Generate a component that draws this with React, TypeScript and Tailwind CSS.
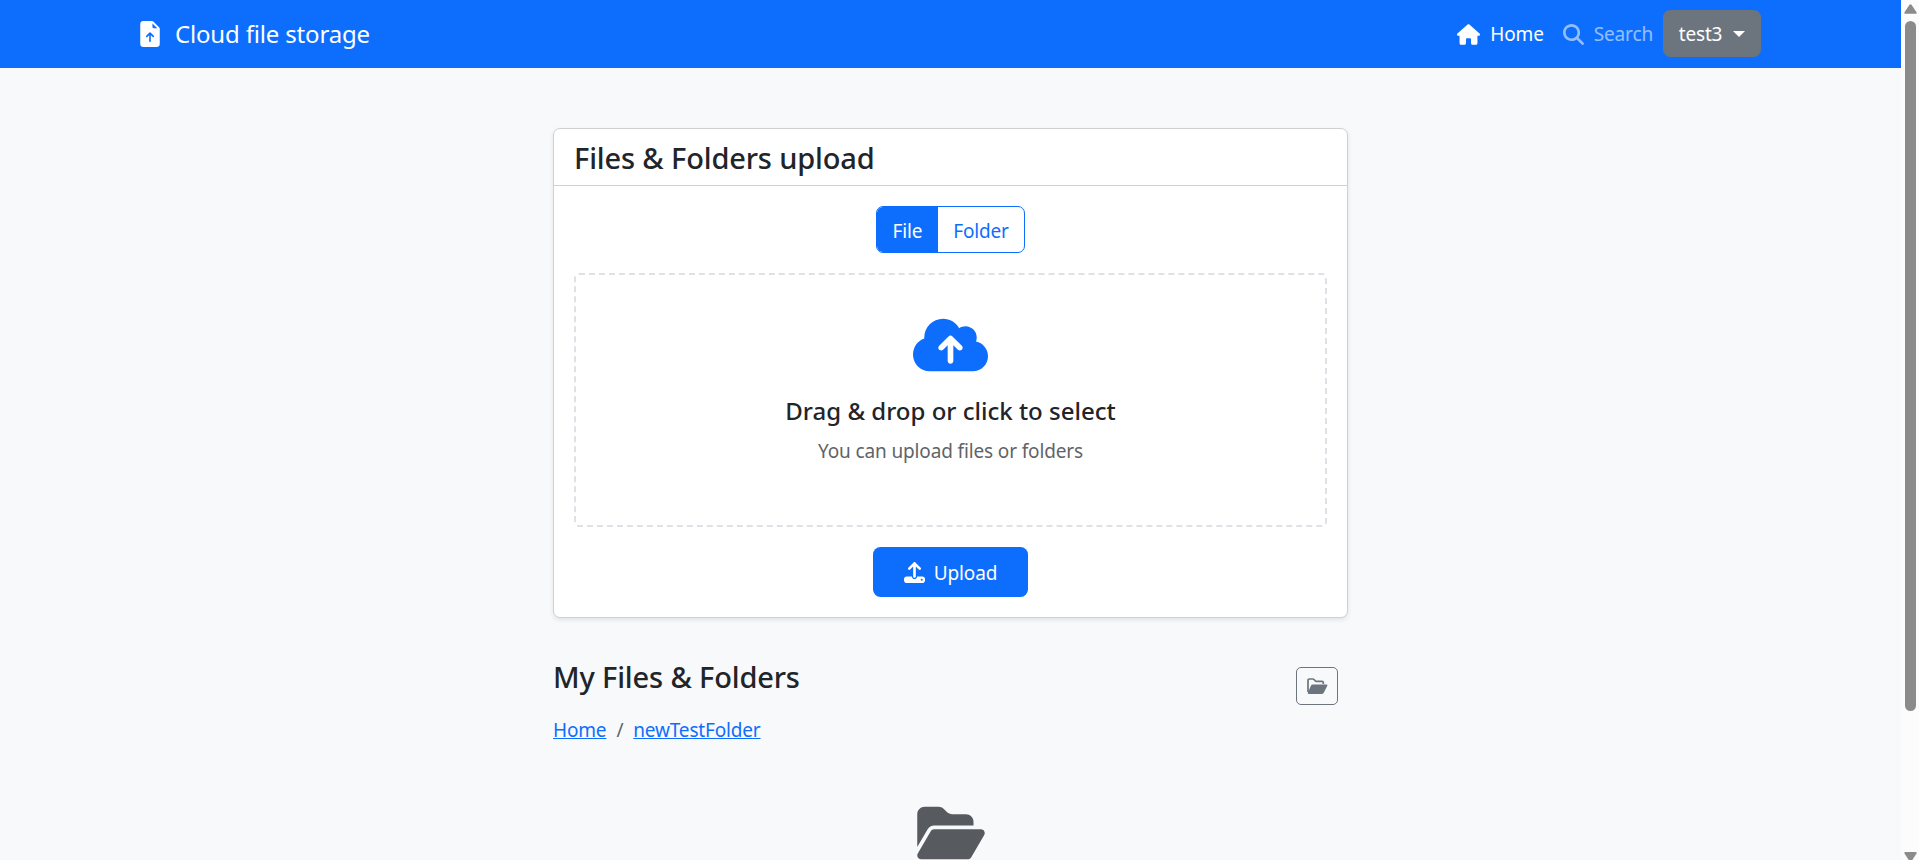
import React from "react";
import {
  FaFolderOpen,
  FaHouse,
  FaMagnifyingGlass,
  FaCloudArrowUp,
  FaUpload,
} from "react-icons/fa6";
import { BsFileEarmarkArrowUpFill } from "react-icons/bs";

function FolderIcon() {
  return (
    <svg width="21" height="16" viewBox="0 0 21 16" fill="none">
      <path
        d="M1 14V2.300Q1 1 2.300 1H5.800Q6.500 1 7 1.500L8.300 2.800Q8.800 3.300 9.500 3.300H15Q16.300 3.300 16.300 4.600V6"
        stroke="currentColor"
        strokeWidth="1.700"
      />
      <path
        d="M5.600 6.600H19.600Q20.900 6.600 20.300 7.800L16.900 14.600Q16.200 15.900 14.900 15.900H1.800Q.3 15.900.9 14.600L4 7.600Q4.500 6.600 5.600 6.600Z"
        fill="currentColor"
      />
    </svg>
  );
}

function Navbar() {
  return (
    <nav className="flex h-[68px] items-center justify-between bg-[#0d6efd] pr-[140px] pb-px pl-[137px] text-white">
      <a className="flex items-center">
        <BsFileEarmarkArrowUpFill className="size-[26px]" />
        <span className="ml-[12px] pt-px text-[24px] tracking-[-0.17px]">Cloud file storage</span>
      </a>
      <div className="flex items-center text-[19px] tracking-[-0.15px]">
        <a className="flex items-center gap-[10px] pt-px">
          <FaHouse className="h-[21px] w-[23px]" />
          Home
        </a>
        <a className="ml-[19px] flex items-center gap-[10px] pt-px text-white/55">
          <FaMagnifyingGlass className="size-[21px]" />
          Search
        </a>
        <button className="ml-[10px] flex h-[47px] w-[98px] items-center justify-center gap-[11px] rounded-[7.5px] bg-[#6c757d]">
          <span className="pt-px">test3</span>
          <svg width="12" height="6" viewBox="0 0 12 6" fill="currentColor">
            <path d="M0 0h12L6 6z" />
          </svg>
        </button>
      </div>
    </nav>
  );
}

function UploadCard() {
  return (
    <section className="flex h-[490px] flex-col rounded-[7px] border border-[#cfd0d1] bg-white shadow-[0_2px_5px_rgba(0,0,0,0.09)]">
      <h4 className="flex h-[57px] items-center border-b border-[#cfd0d1] px-5 pt-[2px] text-[29px] font-medium tracking-[-0.15px]">
        Files &amp; Folders upload
      </h4>
      <div className="flex flex-col items-center px-5 pt-5">
        <div className="flex h-[47px] w-[149px] overflow-hidden rounded-[7px] border border-[#0d6efd] text-[19px] tracking-[-0.15px]">
          <button className="w-[61px] bg-[#0d6efd] pt-[3px] text-white">File</button>
          <button className="flex-1 pt-[3px] text-[#0d6efd]">Folder</button>
        </div>
        <div className="mt-5 flex h-[254px] w-full flex-col items-center rounded-[5px] border-2 border-dashed border-[#dee2e6]">
          <FaCloudArrowUp className="mt-[40px] h-[60px] w-[75px] text-[#0d6efd]" />
          <h5 className="mt-[21px] text-[24px] leading-[30px] font-medium">
            Drag &amp; drop or click to select
          </h5>
          <p className="mt-[10px] text-[19px] leading-[30px] tracking-[-0.14px] text-[#5f6468]">
            You can upload files or folders
          </p>
        </div>
        <button className="mt-5 flex h-[50px] w-[155px] items-center justify-center gap-[9px] rounded-[7.5px] bg-[#0d6efd] text-[19px] tracking-[-0.15px] text-white">
          <FaUpload className="size-[21px]" />
          <span className="pt-[2px]">Upload</span>
        </button>
      </div>
    </section>
  );
}

function Files() {
  return (
    <section>
      <div className="mt-[41px] flex justify-between pr-[10px]">
        <h4 className="text-[29px] leading-[36px] font-medium tracking-[-0.15px]">My Files &amp; Folders</h4>
        <button className="mt-[8px] flex h-[38px] w-[42px] items-center justify-center rounded-[5px] border border-[#6c757d] text-[#6c757d]">
          <FolderIcon />
        </button>
      </div>
      <nav className="mt-[10px] flex text-[19px] leading-[30px] tracking-[-0.17px] text-[#0d6efd]">
        <a className="underline">Home</a>
        <span className="mx-[10px] text-[#5f6468]">/</span>
        <a className="underline">newTestFolder</a>
      </nav>
      <FaFolderOpen className="mx-auto mt-[58px] h-[60px] w-[68px] text-[#575b5f]" />
    </section>
  );
}

function Scrollbar() {
  return (
    <div className="flex h-full w-[18px] flex-col items-center bg-[#fcfcfc] text-[#8b8b8b]">
      <svg className="mt-1 shrink-0" width="13" height="10" viewBox="0 0 13 10" fill="currentColor">
        <path d="M5.500.8q1-1.200 2 0l5 7.400q.6 1.600-1 1.600h-10q-1.600 0-1-1.600z" />
      </svg>
      <div className="mt-[7px] h-[690px] w-[11px] rounded-full bg-[#8b8b8b]" />
      <svg className="mt-auto shrink-0" width="13" height="8" viewBox="0 0 13 8" fill="currentColor">
        <path d="M1.500 0h10q1.600 0 1 1.600L8.300 8H4.700L.5 1.600Q-.1 0 1.500 0z" />
      </svg>
    </div>
  );
}

export default function App() {
  return (
    <div className="flex h-[860px] overflow-hidden bg-[#f8f9fa] font-['Noto_Sans',sans-serif] text-[#212529]">
      <div className="flex-1 overflow-hidden bg-[#f8f9fb]">
        <Navbar />
        <main className="mx-auto mt-[60px] w-[795px]">
          <UploadCard />
          <Files />
        </main>
      </div>
      <Scrollbar />
    </div>
  );
}
